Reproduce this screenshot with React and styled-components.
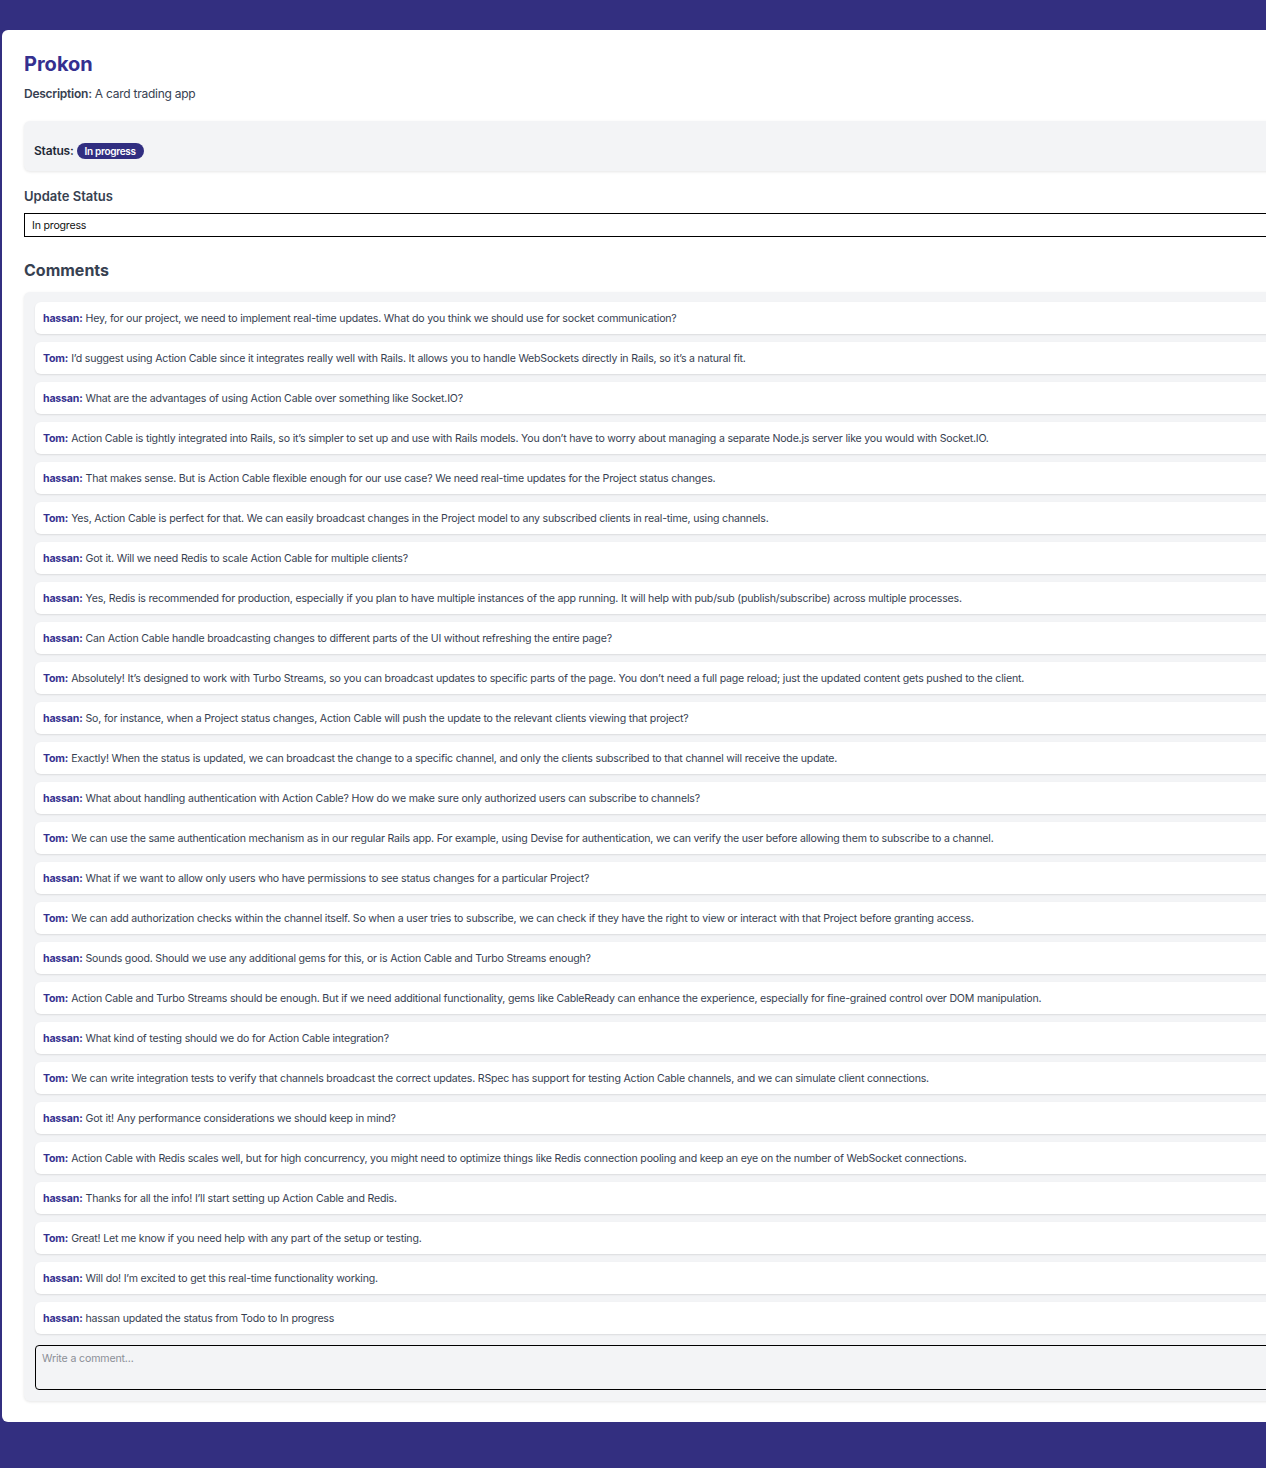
import React from 'react';
import styled, { createGlobalStyle } from 'styled-components';

const GlobalStyle = createGlobalStyle`
  html, body {
    margin: 0;
    padding: 0;
    background: #332f80;
    overflow-x: hidden;
  }
  body {
    font-family: Inter, "Noto Sans", "Liberation Sans", sans-serif;
    min-height: 100vh;
  }
`;

const Page = styled.div`
  padding: 30px 0 46px 2px;
`;

const Card = styled.div`
  width: 1320px;
  background: #ffffff;
  border-radius: 6px;
  padding: 20px 22px 21px;
  box-sizing: border-box;
`;

const Title = styled.h1`
  margin: 0;
  font-size: 20px;
  line-height: 28px;
  font-weight: 700;
  color: #35308f;
`;

const Description = styled.p`
  margin: 8px 0 19px;
  font-size: 12px;
  line-height: 16px;
  letter-spacing: -0.25px;
  color: #374151;

  strong {
    font-weight: 600;
  }
`;

const StatusBox = styled.div`
  background: #f3f4f6;
  border-radius: 6px;
  padding: 22px 10px 12px;
  box-shadow: 0 1px 3px rgba(0, 0, 0, 0.1);
  font-size: 12px;
  line-height: 16px;
  font-weight: 600;
  letter-spacing: -0.2px;
  color: #1f2937;
  display: flex;
  align-items: center;
  gap: 3px;
`;

const Badge = styled.span`
  background: #312e81;
  color: #ffffff;
  font-size: 10px;
  font-weight: 600;
  line-height: 14px;
  letter-spacing: -0.3px;
  padding: 1px 8px;
  border-radius: 999px;
`;

const Label = styled.h3`
  margin: 16px 0 8px;
  font-size: 13px;
  line-height: 18px;
  font-weight: 600;
  color: #374151;
`;

const Select = styled.div`
  border: 1px solid #000000;
  height: 24px;
  box-sizing: border-box;
  padding: 0 7px;
  display: flex;
  align-items: center;
  font-size: 10.6px;
  letter-spacing: -0.2px;
  color: #111111;
`;

const SectionTitle = styled.h2`
  margin: 22px 0 11px;
  font-size: 16px;
  line-height: 22px;
  font-weight: 700;
  color: #374151;
`;

const CommentList = styled.div`
  background: #f3f4f6;
  border-radius: 6px;
  padding: 10px 10px 11px 11px;
  box-shadow: 0 1px 3px rgba(0, 0, 0, 0.1);
  display: flex;
  flex-direction: column;
  gap: 8px;
`;

const Comment = styled.div`
  background: #ffffff;
  border-radius: 6px;
  padding: 9px 8px 7px;
  font-size: 10.6px;
  line-height: 16px;
  letter-spacing: -0.2px;
  color: #374151;
  box-shadow: 0 1px 2px rgba(0, 0, 0, 0.1);
`;

const Author = styled.span`
  font-weight: 700;
  color: #35308f;
  margin-right: 3px;
`;

const CommentInput = styled.textarea`
  margin-top: 3px;
  height: 45px;
  box-sizing: border-box;
  border: 1px solid #000000;
  border-radius: 4px;
  background: #f3f4f6;
  padding: 6px 6px;
  font-family: inherit;
  font-size: 10.6px;
  letter-spacing: -0.15px;
  resize: none;
  color: #374151;

  &::placeholder {
    color: #8b8f97;
  }
`;

const comments = [
  ['hassan', 'Hey, for our project, we need to implement real-time updates. What do you think we should use for socket communication?'],
  ['Tom', 'I\u2019d suggest using Action Cable since it integrates really well with Rails. It allows you to handle WebSockets directly in Rails, so it\u2019s a natural fit.'],
  ['hassan', 'What are the advantages of using Action Cable over something like Socket.IO?'],
  ['Tom', 'Action Cable is tightly integrated into Rails, so it\u2019s simpler to set up and use with Rails models. You don\u2019t have to worry about managing a separate Node.js server like you would with Socket.IO.'],
  ['hassan', 'That makes sense. But is Action Cable flexible enough for our use case? We need real-time updates for the Project status changes.'],
  ['Tom', 'Yes, Action Cable is perfect for that. We can easily broadcast changes in the Project model to any subscribed clients in real-time, using channels.'],
  ['hassan', 'Got it. Will we need Redis to scale Action Cable for multiple clients?'],
  ['hassan', 'Yes, Redis is recommended for production, especially if you plan to have multiple instances of the app running. It will help with pub/sub (publish/subscribe) across multiple processes.'],
  ['hassan', 'Can Action Cable handle broadcasting changes to different parts of the UI without refreshing the entire page?'],
  ['Tom', 'Absolutely! It\u2019s designed to work with Turbo Streams, so you can broadcast updates to specific parts of the page. You don\u2019t need a full page reload; just the updated content gets pushed to the client.'],
  ['hassan', 'So, for instance, when a Project status changes, Action Cable will push the update to the relevant clients viewing that project?'],
  ['Tom', 'Exactly! When the status is updated, we can broadcast the change to a specific channel, and only the clients subscribed to that channel will receive the update.'],
  ['hassan', 'What about handling authentication with Action Cable? How do we make sure only authorized users can subscribe to channels?'],
  ['Tom', 'We can use the same authentication mechanism as in our regular Rails app. For example, using Devise for authentication, we can verify the user before allowing them to subscribe to a channel.'],
  ['hassan', 'What if we want to allow only users who have permissions to see status changes for a particular Project?'],
  ['Tom', 'We can add authorization checks within the channel itself. So when a user tries to subscribe, we can check if they have the right to view or interact with that Project before granting access.'],
  ['hassan', 'Sounds good. Should we use any additional gems for this, or is Action Cable and Turbo Streams enough?'],
  ['Tom', 'Action Cable and Turbo Streams should be enough. But if we need additional functionality, gems like CableReady can enhance the experience, especially for fine-grained control over DOM manipulation.'],
  ['hassan', 'What kind of testing should we do for Action Cable integration?'],
  ['Tom', 'We can write integration tests to verify that channels broadcast the correct updates. RSpec has support for testing Action Cable channels, and we can simulate client connections.'],
  ['hassan', 'Got it! Any performance considerations we should keep in mind?'],
  ['Tom', 'Action Cable with Redis scales well, but for high concurrency, you might need to optimize things like Redis connection pooling and keep an eye on the number of WebSocket connections.'],
  ['hassan', 'Thanks for all the info! I\u2019ll start setting up Action Cable and Redis.'],
  ['Tom', 'Great! Let me know if you need help with any part of the setup or testing.'],
  ['hassan', 'Will do! I\u2019m excited to get this real-time functionality working.'],
  ['hassan', 'hassan updated the status from Todo to In progress'],
];

export default function App() {
  return (
    <>
      <GlobalStyle />
      <Page>
        <Card>
          <Title>Prokon</Title>
          <Description>
            <strong>Description:</strong> A card trading app
          </Description>
          <StatusBox>
            Status: <Badge>In progress</Badge>
          </StatusBox>
          <Label>Update Status</Label>
          <Select>In progress</Select>
          <SectionTitle>Comments</SectionTitle>
          <CommentList>
            {comments.map(([author, text], i) => (
              <Comment key={i}>
                <Author>{author}:</Author>
                {text}
              </Comment>
            ))}
            <CommentInput placeholder="Write a comment..." />
          </CommentList>
        </Card>
      </Page>
    </>
  );
}
